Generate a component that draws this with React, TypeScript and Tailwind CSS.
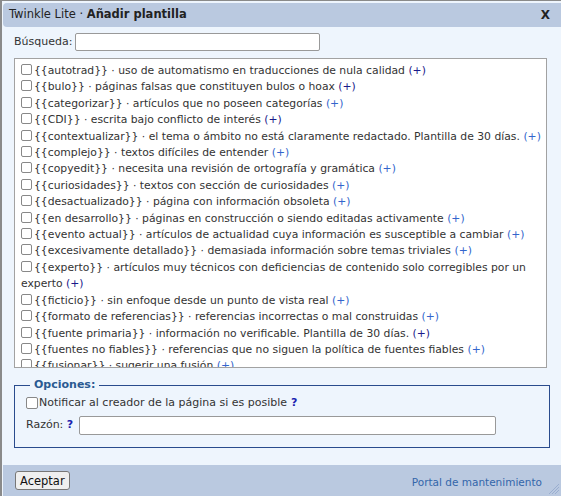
const items: { tag: string; desc: string; visited?: boolean }[] = [
  { tag: "autotrad", desc: "uso de automatismo en traducciones de nula calidad", visited: true },
  { tag: "bulo", desc: "páginas falsas que constituyen bulos o hoax", visited: true },
  { tag: "categorizar", desc: "artículos que no poseen categorías" },
  { tag: "CDI", desc: "escrita bajo conflicto de interés", visited: true },
  { tag: "contextualizar", desc: "el tema o ámbito no está claramente redactado. Plantilla de 30 días." },
  { tag: "complejo", desc: "textos difíciles de entender" },
  { tag: "copyedit", desc: "necesita una revisión de ortografía y gramática" },
  { tag: "curiosidades", desc: "textos con sección de curiosidades" },
  { tag: "desactualizado", desc: "página con información obsoleta" },
  { tag: "en desarrollo", desc: "páginas en construcción o siendo editadas activamente" },
  { tag: "evento actual", desc: "artículos de actualidad cuya información es susceptible a cambiar" },
  { tag: "excesivamente detallado", desc: "demasiada información sobre temas triviales" },
  { tag: "experto", desc: "artículos muy técnicos con deficiencias de contenido solo corregibles por un experto", visited: true },
  { tag: "ficticio", desc: "sin enfoque desde un punto de vista real" },
  { tag: "formato de referencias", desc: "referencias incorrectas o mal construidas" },
  { tag: "fuente primaria", desc: "información no verificable. Plantilla de 30 días.", visited: true },
  { tag: "fuentes no fiables", desc: "referencias que no siguen la política de fuentes fiables" },
  { tag: "fusionar", desc: "sugerir una fusión" },
  { tag: "globalizar", desc: "artículos con enfoque regional" },
];

export default function App() {
  return (
    <div
      className="flex h-[496px] w-[561px] flex-col overflow-hidden border-l-2 border-t border-[#8a8a8a] bg-[#eef5fd] pl-[1px] pt-[2px] text-[#333]"
      style={{ fontFamily: '"DejaVu Sans", sans-serif' }}
    >
      <div className="flex h-[24px] items-center justify-between rounded-l-[4px] bg-[#bac9e0] pl-[6px] pr-[11px] text-[11.5px] text-[#222]">
        <span>
          Twinkle Lite · <b className="font-bold">Añadir plantilla</b>
        </span>
        <span className="text-[12px] font-bold">X</span>
      </div>

      <div className="flex flex-1 flex-col px-[11px] pt-[6px] text-[11px]">
        <div className="flex items-center gap-[3px]">
          <span>Búsqueda:</span>
          <input className="h-[18px] w-[245px] rounded-[2px] border border-[#999] bg-white" />
        </div>

        <div className="mt-[7px] h-[310px] w-[533px] overflow-hidden border border-[#a2a2a2] bg-white pl-[6px] pr-[1px] pt-[4px] text-[10.8px] leading-[16.4px]">
          {items.map((it) => (
            <div key={it.tag}>
              <input
                type="checkbox"
                className="mr-[2px] h-[11px] w-[11px] appearance-none rounded-[2px] border border-[#888] bg-white align-[-1px]"
              />
              {"{{" + it.tag + "}}"} · {it.desc}{" "}
              <span className={it.visited ? "text-[#1a1a8a]" : "text-[#3366cc]"}>(+)</span>
            </div>
          ))}
        </div>

        <fieldset className="mt-[9px] h-[71px] w-[536px] border border-[#2a4b8d] px-[11px] pb-[6px]">
          <legend className="ml-[4px] px-[4px] font-bold text-[#2a5a92]">Opciones:</legend>
          <label className="mt-[1px] flex items-center">
            <input
              type="checkbox"
              className="mr-[1px] h-[12px] w-[12px] appearance-none rounded-[2px] border border-[#888] bg-white"
            />
            Notificar al creador de la página si es posible{" "}
            <b className="ml-[4px] text-[#1a22b0]">?</b>
          </label>
          <div className="mt-[5px] flex items-center">
            <span>
              Razón: <b className="text-[#1a22b0]">?</b>
            </span>
            <input className="ml-[6px] h-[19px] w-[417px] rounded-[2px] border border-[#999] bg-white" />
          </div>
        </fieldset>
      </div>

      <div className="relative flex h-[31px] items-center justify-between bg-[#bac9e0] pl-[12px] pr-[19px] text-[10.5px]">
        <button className="h-[19px] rounded-[3px] border border-[#777] bg-[#efefef] px-[4px] text-[11.5px] leading-[16px] text-[#111]">
          Aceptar
        </button>
        <span className="mt-[4px] text-[#3366aa]">Portal de mantenimiento</span>
        <svg className="absolute bottom-[1px] right-[1px]" width="12" height="12" viewBox="0 0 12 12">
          <path d="M11 1L1 11M11 4L4 11M11 7L7 11" stroke="#9aaed0" strokeWidth="1" />
        </svg>
      </div>
    </div>
  );
}
